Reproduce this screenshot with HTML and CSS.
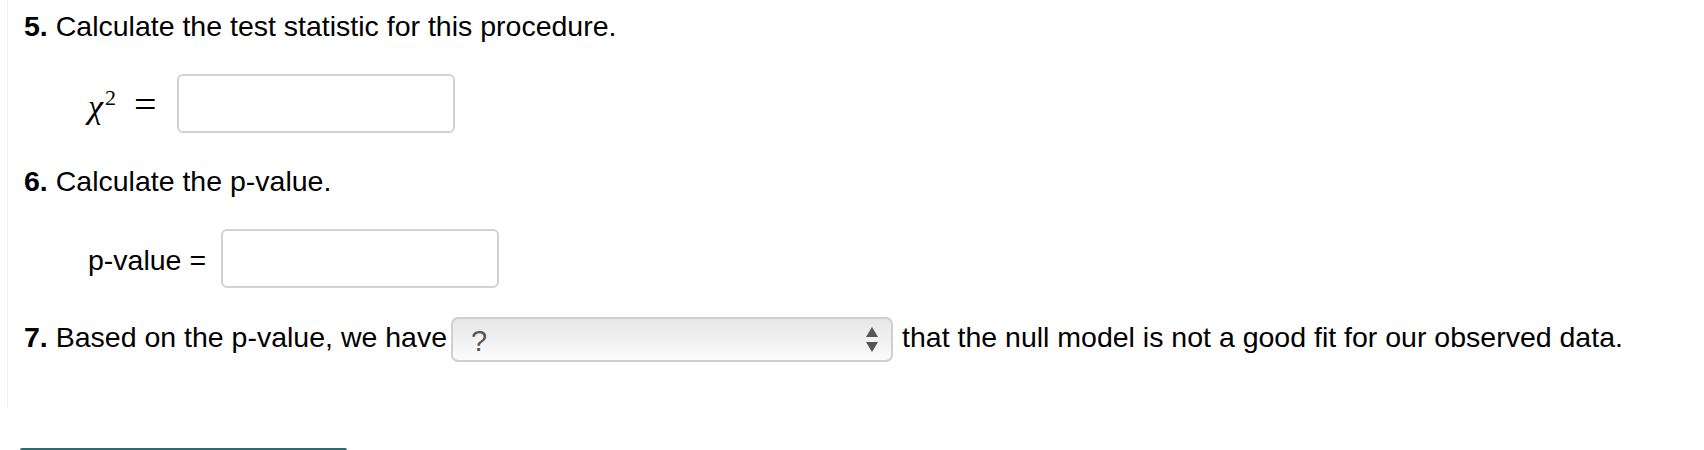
FILE: index.html
```html
<!DOCTYPE html>
<html lang="en">
<head>
  <meta charset="UTF-8">
  <title>Chi-square test - questions</title>
  <link rel="stylesheet" href="styles.css">
</head>
<body>
  <div class="container">
    <div class="question"><b>5.</b> Calculate the test statistic for this procedure.</div>
    <div class="answer-row chi-row">
      <span class="math"><i>&chi;</i><sup>2</sup><span class="eq">=</span></span>
      <input class="answer" type="text">
    </div>

    <div class="question q6"><b>6.</b> Calculate the p-value.</div>
    <div class="answer-row p-row">
      <span class="label">p-value =</span>
      <input class="answer" type="text">
    </div>

    <div class="question-row">
      <span class="text"><b>7.</b> Based on the p-value, we have</span>
      <div class="select">
        <span>?</span>
        <svg width="14" height="28" viewBox="0 0 14 28">
          <path d="M7 1 L13 11 L1 11 Z" fill="#555"/>
          <path d="M1 16 L13 16 L7 26 Z" fill="#555"/>
        </svg>
      </div>
      <span class="text after">that the null model is not a good fit for our observed data.</span>
    </div>
  </div>
  <div class="button"></div>
</body>
</html>
```

FILE: styles.css
```css
body {
  margin: 0;
  font-family: "Liberation Sans", Arial, Helvetica, sans-serif;
  font-size: 28.5px;
  line-height: 32px;
  color: #000;
  background: #fff;
}

.container {
  margin-left: 7px;
  border-left: 1px solid #f0f0f0;
  padding: 10px 0 46px 16px;
}

.question {
  height: 32px;
}

.q6 {
  margin-top: 32px;
}

.answer-row {
  display: flex;
  align-items: center;
  margin-top: 32px;
  padding-left: 64px;
}

.chi-row {
  gap: 20px;
}

.p-row {
  gap: 15px;
}

.math {
  font-family: "Liberation Serif", "Times New Roman", serif;
  font-size: 34px;
  line-height: 40px;
  padding-top: 4px;
}

.math sup {
  font-size: 22px;
  line-height: 0;
  vertical-align: 13px;
  margin-left: 2px;
}

.math .eq {
  font-size: 40px;
  margin-left: 18px;
}

.label {
  padding-top: 2px;
}

.answer {
  box-sizing: border-box;
  width: 278px;
  height: 59px;
  margin: 0;
  border: 2px solid #d2d2d2;
  border-radius: 6px;
  background: #fff;
  font-size: 24px;
}

.question-row {
  display: flex;
  align-items: center;
  margin-top: 29px;
}

.question-row .text {
  padding-bottom: 6px;
}

.question-row .after {
  margin-left: 9px;
}

.select {
  box-sizing: border-box;
  width: 442px;
  height: 45px;
  margin-left: 4px;
  display: flex;
  align-items: center;
  justify-content: space-between;
  padding: 2px 12px 0 18px;
  border: 2px solid #cfcfcf;
  border-radius: 7px;
  background: linear-gradient(#e6e6e6, #f2f2f2 55%, #fbfbfb);
  color: #555;
  font-size: 29px;
}

.select svg {
  margin-top: -2px;
}

.button {
  margin: 40px 0 0 20px;
  width: 327px;
  height: 0;
  border-top: 2px solid #2e6b6c;
  border-radius: 4px 4px 0 0;
}
```
